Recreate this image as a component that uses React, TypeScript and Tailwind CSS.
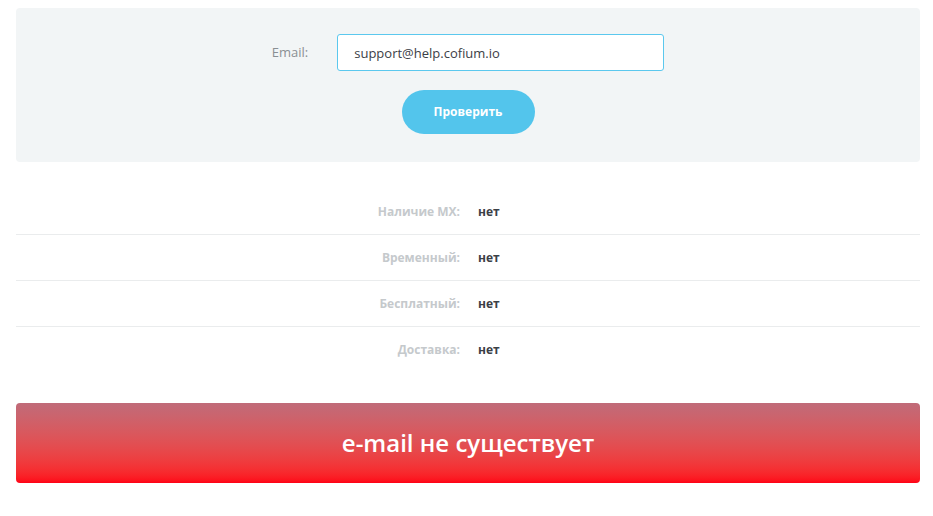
const rows = [
  { label: "Наличие MX:", value: "нет" },
  { label: "Временный:", value: "нет" },
  { label: "Бесплатный:", value: "нет" },
  { label: "Доставка:", value: "нет" },
];

export default function App() {
  return (
    <div className="min-h-[516px] bg-white pl-4 pr-[13px] pt-2 font-['Open_Sans',sans-serif]">
      <div className="flex h-[154px] flex-col items-center rounded-[4px] bg-[#f2f5f6] pt-[26px]">
        <div className="flex items-center">
          <label className="mr-[29px] text-[13px] text-[#8a8f93]">Email:</label>
          <input
            defaultValue="support@help.cofium.io"
            className="h-[37px] w-[327px] rounded-[3px] border border-[#5bc8ee] bg-white px-4 text-[13px] text-[#3b4046] outline-none"
          />
        </div>
        <button className="mt-[19px] h-[44px] w-[133px] rounded-full bg-[#53c5ec] text-[12px] font-bold text-white">
          Проверить
        </button>
      </div>

      <div className="mt-[27px]">
        {rows.map((row, i) => (
          <div
            key={row.label}
            className={`flex h-[46px] items-center ${i < rows.length - 1 ? "border-b border-[#eaeced]" : ""}`}
          >
            <div className="w-[444px] text-right text-[12px] font-bold text-[#c5c9cc]">{row.label}</div>
            <div className="ml-[18px] text-[12px] font-bold text-[#3b4046]">{row.value}</div>
          </div>
        ))}
      </div>

      <div className="mt-[30px] flex h-[80px] items-center justify-center rounded-[4px] bg-gradient-to-b from-[#c06b79] to-[#ff0016]">
        <span className="text-[24px] font-semibold text-white">e-mail не существует</span>
      </div>
    </div>
  );
}
